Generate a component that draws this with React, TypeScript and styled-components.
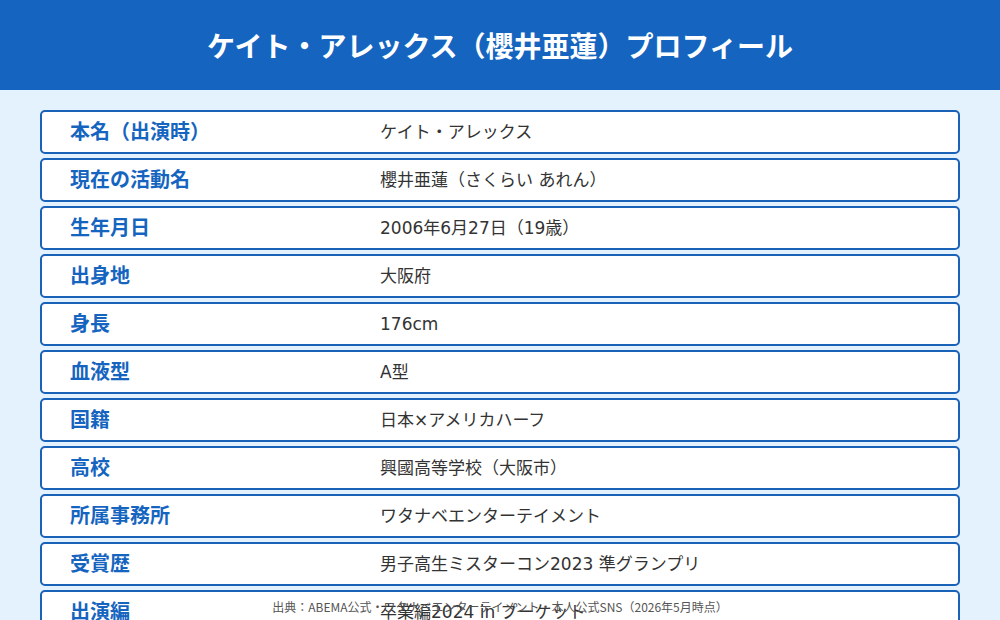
import React from "react";
import styled, { createGlobalStyle } from "styled-components";

const GlobalStyle = createGlobalStyle`
  html, body {
    margin: 0;
    padding: 0;
    background: #e3f2fd;
  }
  body {
    font-family: "Noto Sans CJK JP", "Noto Sans", sans-serif;
  }
`;

const Page = styled.div`
  height: 100vh;
  overflow: hidden;
  display: flex;
  flex-direction: column;
  background: #e3f2fd;
`;

const Header = styled.header`
  flex: 0 0 90px;
  background: #1565c0;
  display: flex;
  align-items: center;
  justify-content: center;
`;

const Title = styled.h1`
  margin: 0;
  color: #ffffff;
  font-size: 28px;
  font-weight: 700;
  line-height: 1;
  letter-spacing: 0;
`;

const Main = styled.main`
  flex: 1;
  min-height: 0;
  padding: 20px 40px 0;
  display: flex;
  flex-direction: column;
  gap: 4px;
`;

const Row = styled.div`
  flex: 0 0 auto;
  height: 44px;
  box-sizing: border-box;
  border: 2px solid #1a62b8;
  border-radius: 5px;
  background: #ffffff;
  display: grid;
  grid-template-columns: 310px 1fr;
  align-items: center;
  padding-left: 28px;
`;

const Label = styled.div`
  color: #1565c0;
  font-size: 20px;
  font-weight: 700;
  line-height: 1;
  padding-bottom: 2px;
`;

const Value = styled.div`
  color: #333333;
  font-family: "DejaVu Sans", "Noto Sans CJK JP", sans-serif;
  font-size: 17px;
  font-weight: 400;
  line-height: 1;
`;

const Footer = styled.footer`
  flex: 0 0 26px;
  display: flex;
  align-items: center;
  justify-content: center;
  color: #555555;
  font-size: 12px;
  line-height: 1;
`;

const rows: [string, string][] = [
  ["本名（出演時）", "ケイト・アレックス"],
  ["現在の活動名", "櫻井亜蓮（さくらい あれん）"],
  ["生年月日", "2006年6月27日（19歳）"],
  ["出身地", "大阪府"],
  ["身長", "176cm"],
  ["血液型", "A型"],
  ["国籍", "日本×アメリカハーフ"],
  ["高校", "興國高等学校（大阪市）"],
  ["所属事務所", "ワタナベエンターテイメント"],
  ["受賞歴", "男子高生ミスターコン2023 準グランプリ"],
  ["出演編", "卒業編2024 in プーケット"],
];

export default function App() {
  return (
    <>
      <GlobalStyle />
      <Page>
        <Header>
          <Title>ケイト・アレックス（櫻井亜蓮）プロフィール</Title>
        </Header>
        <Main>
          {rows.map(([k, v]) => (
            <Row key={k}>
              <Label>{k}</Label>
              <Value>{v}</Value>
            </Row>
          ))}
        </Main>
        <Footer>
          出典：ABEMA公式・ワタナベエンターテイメント・本人公式SNS（2026年5月時点）
        </Footer>
      </Page>
    </>
  );
}
